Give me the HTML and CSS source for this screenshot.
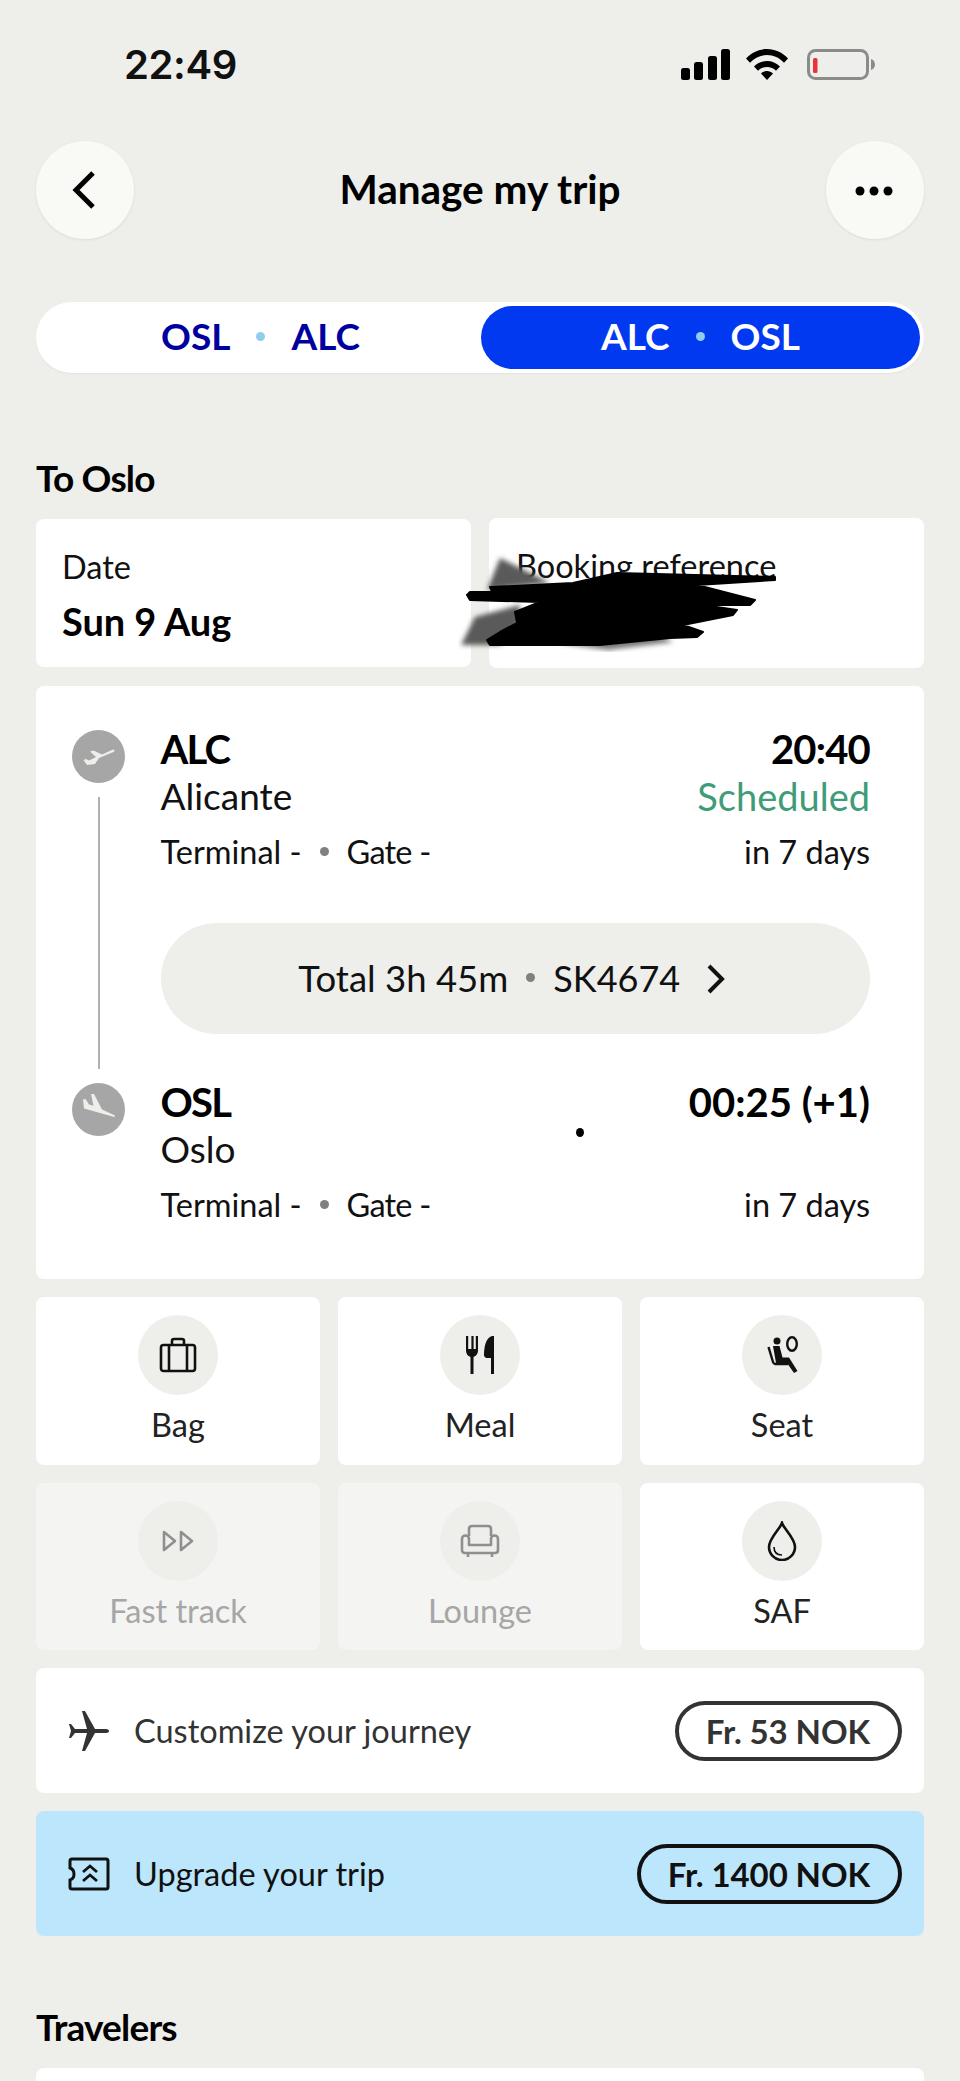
FILE: index.html
```html
<!DOCTYPE html>
<html lang="en">
<head>
<meta charset="utf-8">
<title>Manage my trip</title>
<link rel="stylesheet" href="styles.css">
</head>
<body>
<div class="page">
  <div class="status">
    <span class="clock">22:49</span>
    <div class="status-icons">
      <svg class="ic-signal" viewBox="0 0 49 31"><rect x="0" y="19" width="9" height="12" rx="2.5"/><rect x="13" y="13" width="9" height="18" rx="2.5"/><rect x="27" y="7" width="9" height="24" rx="2.5"/><rect x="40" y="0" width="9" height="31" rx="2.5"/></svg>
      <svg class="ic-wifi" viewBox="0 0 42 31"><path d="M0 9.500C5.500 3.500 13 0 21 0s15.500 3.500 21 9.500l-4 4.200C33.500 8.800 27.500 6 21 6S8.500 8.800 4 13.700z"/><path d="M8 17.500C11.500 14 16 12 21 12s9.500 2 13 5.500l-4 4.200C27.500 19.300 24.500 18 21 18s-6.500 1.300-9 3.700z"/><path d="M15 24.500c1.600-1.500 3.700-2.500 6-2.500s4.400 1 6 2.500L21 31z"/></svg>
      <svg class="ic-battery" viewBox="0 0 68 31"><rect x="1.500" y="1.500" width="59" height="28" rx="7" fill="none" stroke="#8b8b8b" stroke-width="3"/><rect x="6" y="9" width="4.500" height="15" rx="1.500" fill="#e8323c"/><path d="M64 10c2.500.5 4 3 4 5.500s-1.500 5-4 5.500z" fill="#8b8b8b"/></svg>
    </div>
  </div>

  <header class="topbar">
    <button class="round-btn"><svg class="ic-back" viewBox="0 0 24 40"><path d="M21 3 4 20l17 17" fill="none" stroke="#000" stroke-width="5"/></svg></button>
    <h1 class="title">Manage my trip</h1>
    <button class="round-btn"><svg class="ic-more" viewBox="0 0 38 10"><circle cx="5" cy="5" r="4.500"/><circle cx="19" cy="5" r="4.500"/><circle cx="33" cy="5" r="4.500"/></svg></button>
  </header>

  <nav class="segments">
    <div class="segment"><span>OSL</span><i class="seg-dot"></i><span>ALC</span></div>
    <div class="segment segment-active"><span>ALC</span><i class="seg-dot"></i><span>OSL</span></div>
  </nav>

  <h2 class="heading heading-trip">To Oslo</h2>

  <section class="info-row">
    <div class="info-card info-card-date">
      <div class="info-label">Date</div>
      <div class="info-value">Sun 9 Aug</div>
    </div>
    <div class="info-card info-card-ref">
      <div class="info-label">Booking reference</div>
    </div>
  </section>

  <section class="flight">
    <div class="rail">
      <span class="rail-icon"><svg viewBox="0 0 53 53"><path d="M41 19.500c2 .5 2 2 .5 2.500L27 28 23 34l-8 1-3.500-5 2.500-1 3 1.500 7-3.500-6-5.500 3.500-1 8.500 4z" fill="#eeeeeb"/></svg></span>
      <span class="rail-line"></span>
      <span class="rail-icon"><svg viewBox="0 0 53 53"><path d="M42 32c1.500.5 1.500 2.300-.5 1.800L12 25.500l-1-9 2.500-.5 3.500 5.500 4.500 1.300L19 11h3l8 15.500z" fill="#eeeeeb"/></svg></span>
    </div>
    <div class="legs">
      <div class="stop">
        <div class="stop-row stop-strong"><span class="code">ALC</span><span class="time-tight">20:40</span></div>
        <div class="stop-row stop-city"><span>Alicante</span><span class="ok">Scheduled</span></div>
        <div class="stop-row stop-meta"><span class="gate"><span>Terminal -</span><i class="meta-dot"></i><span class="gate-name">Gate -</span></span><span>in 7 days</span></div>
      </div>
      <div class="duration"><span class="total">Total 3h 45m</span><i class="meta-dot"></i><span>SK4674</span><svg class="ic-chev" viewBox="0 0 20 30"><path d="M3 2l13 13L3 28" fill="none" stroke="#111" stroke-width="4"/></svg></div>
      <div class="stop">
        <div class="stop-row stop-strong"><span class="code">OSL</span><span>00:25 (+1)</span></div>
        <div class="stop-row stop-city"><span>Oslo</span></div>
        <div class="stop-row stop-meta"><span class="gate"><span>Terminal -</span><i class="meta-dot"></i><span class="gate-name">Gate -</span></span><span>in 7 days</span></div>
      </div>
    </div>
  </section>

  <section class="services">
    <div class="service">
      <span class="service-icon"><svg viewBox="0 0 40 40"><g fill="none" stroke="#111" stroke-width="2.600" stroke-linejoin="round"><rect x="3" y="10" width="34" height="26" rx="2.500"/><path d="M14 10V6a2 2 0 0 1 2-2h8a2 2 0 0 1 2 2v4M11 10v26M29 10v26"/></g></svg></span>
      <span class="service-label">Bag</span>
    </div>
    <div class="service">
      <span class="service-icon"><svg viewBox="0 0 40 40"><path d="M6 1v14c0 4 2 6 4.500 7v17h3V22c2.500-1 4.500-3 4.500-7V1h-2.200v13h-2.200V1h-2.200v13H8.200V1z M24 21c0-10 2-18 8-20h2v38h-3V23h-5z" fill="#111"/></svg></span>
      <span class="service-label">Meal</span>
    </div>
    <div class="service">
      <span class="service-icon"><svg viewBox="0 0 40 40"><circle cx="15" cy="6" r="3.500"/><ellipse cx="30" cy="9" rx="4.800" ry="6.800" fill="none" stroke="#111" stroke-width="2.400"/><path d="M11 11h6.500l3 11.500h6.500l8.500 13.500-3.500 2L25 28H14z"/><path d="M6.500 12l4.500 15c.3 1 1 2 2 2h13" fill="none" stroke="#111" stroke-width="2.400"/></svg></span>
      <span class="service-label">Seat</span>
    </div>
    <div class="service service-off">
      <span class="service-icon"><svg viewBox="0 0 40 40"><g fill="none" stroke="#8f8f8f" stroke-width="2.600" stroke-linejoin="round"><path d="M6 11l11 9L6 29z"/><path d="M23 11l11 9-11 9z"/></g></svg></span>
      <span class="service-label">Fast track</span>
    </div>
    <div class="service service-off">
      <span class="service-icon"><svg viewBox="0 0 40 40"><g fill="none" stroke="#8f8f8f" stroke-width="2.600" stroke-linejoin="round"><path d="M9 15V8c0-2 1-3 3-3h16c2 0 3 1 3 3v7"/><path d="M9 24h22v-6c0-2 1.500-3.500 3.500-3.500S38 16 38 18v11c0 2-1 3-3 3H5c-2 0-3-1-3-3V18c0-2 1.500-3.500 3.500-3.500S9 16 9 18z"/><path d="M8 32v4M32 32v4"/></g></svg></span>
      <span class="service-label">Lounge</span>
    </div>
    <div class="service">
      <span class="service-icon"><svg viewBox="0 0 40 40"><path d="M20 2c-2 6-13 15-13 24a13 13 0 0 0 26 0C33 17 22 8 20 2z" fill="none" stroke="#111" stroke-width="2.600"/><path d="M12 26c0 5 3 8 8 8" fill="none" stroke="#111" stroke-width="1.600"/></svg></span>
      <span class="service-label">SAF</span>
    </div>
  </section>

  <section class="offer">
    <svg class="offer-icon" viewBox="0 0 42 42"><path d="M41 21c0-1-1-2-3-2H27L17 1h-3l5 18H7L3 14H1l2 7-2 7h2l4-5h12l-5 18h3l10-18h11c2 0 3-1 3-2z" fill="#333"/></svg>
    <span class="offer-text">Customize your journey</span>
    <span class="price">Fr. 53 NOK</span>
  </section>
  <section class="offer offer-up">
    <svg class="offer-icon" viewBox="0 0 42 34"><path d="M4 2h34c1.200 0 2 .8 2 2v26c0 1.200-.8 2-2 2H4c-1.200 0-2-.8-2-2v-7c3-1 4-3.500 4-6s-1-5-4-6V4c0-1.200.8-2 2-2z" fill="none" stroke="#111" stroke-width="3"/><path d="M15 15l7-6 7 6M15 24l7-6 7 6" fill="none" stroke="#111" stroke-width="2.800"/></svg>
    <span class="offer-text">Upgrade your trip</span>
    <span class="price">Fr. 1400 NOK</span>
  </section>

  <h2 class="heading heading-travelers">Travelers</h2>
  <section class="travelers-card"></section>

  <svg class="scribble" viewBox="0 0 330 130">
    <defs><filter id="soft"><feGaussianBlur stdDeviation="2.500"/></filter></defs>
    <path d="M42 28 29 60 92 53z M3 115 17 87 62 75 60 100 42 115z" fill="#5a5a5a" filter="url(#soft)"/>
    <path d="M100 113 150 120 215 112 190 100z" fill="#777" filter="url(#soft)"/>
    <path d="M32 57 115 53 159 43 317 47 317 50 239 55 297 70 292 75 245 75 279 80 275 85 225 95 245 102 239 107 212 108 142 115 32 115 29 110 42 102 59 93 57 82 82 72 12 70 9 65 12 62 34 62z" fill="#000" stroke="#000" stroke-width="2" stroke-linejoin="round"/>
  </svg>
  <i class="speck"></i>
</div>
</body>
</html>
```
FILE: styles.css
```css
* { box-sizing: border-box; }
html, body { margin: 0; padding: 0; }
body { background: #eeeeeb; font-family: "Lato", "Open Sans", sans-serif; color: #111; }
.page { position: relative; width: 960px; height: 2081px; overflow: hidden; padding: 0 36px; }

.status { height: 141px; display: flex; justify-content: space-between; padding: 44px 48px 0 88px; }
.clock { font: 600 40px/42px "Inter", sans-serif; color: #111; letter-spacing: -0.4px; }
.status-icons { display: flex; gap: 16px; align-items: flex-start; padding-top: 5px; }
.ic-signal { width: 49px; height: 31px; }
.ic-wifi { width: 42px; height: 31px; }
.ic-battery { width: 68px; height: 31px; margin-left: 3px; margin-right: 1px; }

.topbar { height: 98px; display: flex; align-items: center; justify-content: space-between; }
.round-btn { width: 98px; height: 98px; border: 0; padding: 0; border-radius: 50%; background: #f9f9f6; box-shadow: 0 1px 3px rgba(0,0,0,.08); display: flex; align-items: center; justify-content: center; }
.ic-back { width: 24px; height: 40px; margin-right: 2px; }
.ic-more { width: 38px; height: 10px; margin-right: 2px; margin-top: 2px; }
.title { margin: 0 0 3px; font-size: 40.500px; font-weight: 700; color: #000; }

.segments { margin-top: 63px; height: 71px; background: #fff; border-radius: 36px; padding: 4px; display: grid; grid-template-columns: 441px 439px; box-shadow: 0 1px 2px rgba(0,0,0,.05); }
.segment { display: flex; align-items: center; justify-content: center; gap: 26px; font-size: 37px; font-weight: 700; color: #00009e; padding-bottom: 4px; }
.segment-active { background: #0039f0; color: #fff; border-radius: 32px; }
.seg-dot { width: 9px; height: 9px; border-radius: 50%; background: #8fcdee; margin-top: 2px; }

.heading { margin: 0; font-size: 37px; line-height: 40px; font-weight: 700; color: #000; letter-spacing: -0.8px; padding-bottom: 2px; height: 40px; }
.heading-trip { margin-top: 85px; }
.heading-travelers { margin-top: 71px; }

.info-row { margin-top: 20px; display: grid; grid-template-columns: 435px 435px; gap: 18px; align-items: center; }
.info-card { background: #fff; border-radius: 8px; padding: 30px 26px 0; }
.info-card-date { height: 148px; }
.info-card-ref { height: 150px; padding-left: 27px; }
.info-label { font-size: 32.500px; line-height: 36px; color: #111; }
.info-value { margin-top: 16px; font-size: 38px; line-height: 40px; font-weight: 700; color: #000; letter-spacing: -0.1px; }

.flight { margin-top: 18px; height: 593px; background: #fff; border-radius: 8px; padding: 41px 54px 0 36px; display: flex; gap: 35.500px; }
.rail { width: 53px; height: 406px; margin-top: 3px; display: flex; flex-direction: column; align-items: center; }
.rail-icon { width: 53px; height: 53px; border-radius: 50%; background: #a6a6a6; flex: none; }
.rail-icon svg { display: block; width: 53px; height: 53px; }
.rail-line { width: 2px; flex: 1; margin: 14px 0; background: #b0b0b0; }
.legs { flex: 1; }
.stop-row { display: flex; justify-content: space-between; align-items: center; padding-bottom: 4px; }
.stop-strong { height: 47px; font-size: 40px; font-weight: 700; color: #000; }
.code { letter-spacing: -1.800px; }
.time-tight { letter-spacing: -0.800px; }
.stop-city { height: 47px; font-size: 37px; color: #111; }
.stop-meta { height: 40px; margin-top: 12px; font-size: 32.500px; color: #111; }
.ok { color: #3f9c78; font-size: 38px; }
.gate { display: flex; align-items: center; gap: 18px; }
.gate-name { letter-spacing: -0.8px; }
.meta-dot { width: 9px; height: 9px; border-radius: 50%; background: #808080; }
.duration { margin: 50px 0 46px; height: 111px; border-radius: 56px; background: #eeeeeb; display: flex; align-items: center; justify-content: center; gap: 18px; font-size: 36px; color: #111; padding: 0 6px 2px 0; }
.total { font-size: 36.500px; }
.ic-chev { width: 20px; height: 30px; margin-left: 8px; margin-top: 2px; }

.services { margin-top: 18px; display: grid; grid-template-columns: repeat(3, 284px); grid-template-rows: 168px 167px; gap: 18px; }
.service { background: #fff; border-radius: 8px; display: flex; flex-direction: column; align-items: center; padding-top: 18px; }
.service-icon { width: 80px; height: 80px; border-radius: 50%; background: #eeeeeb; display: flex; align-items: center; justify-content: center; }
.service-icon svg { width: 40px; height: 40px; fill: #111; }
.service-label { margin-top: 10px; font-size: 32.500px; line-height: 40px; color: #222; }
.service-off { background: #f4f4f2; }
.service-off .service-label { color: #a6a6a6; }

.offer { margin-top: 18px; height: 125px; background: #fff; border-radius: 8px; display: flex; align-items: center; padding: 0 22px 0 32px; color: #333; }
.offer-up { background: #bbe6fc; color: #111; }
.offer-icon { width: 42px; height: 42px; flex: none; }
.offer-text { flex: 1; margin-left: 24px; font-size: 32.500px; }
.price { height: 60px; border-radius: 30px; border: 4px solid currentColor; padding: 0 28px 0 27px; display: flex; align-items: center; font-size: 33px; font-weight: 700; letter-spacing: -0.1px; }

.travelers-card { margin-top: 21px; height: 40px; background: #fff; border-radius: 8px 8px 0 0; }

.scribble { position: absolute; left: 458px; top: 530px; width: 330px; height: 130px; }
.speck { position: absolute; left: 576px; top: 1128px; width: 8px; height: 9px; border-radius: 50%; background: #000; }
```
